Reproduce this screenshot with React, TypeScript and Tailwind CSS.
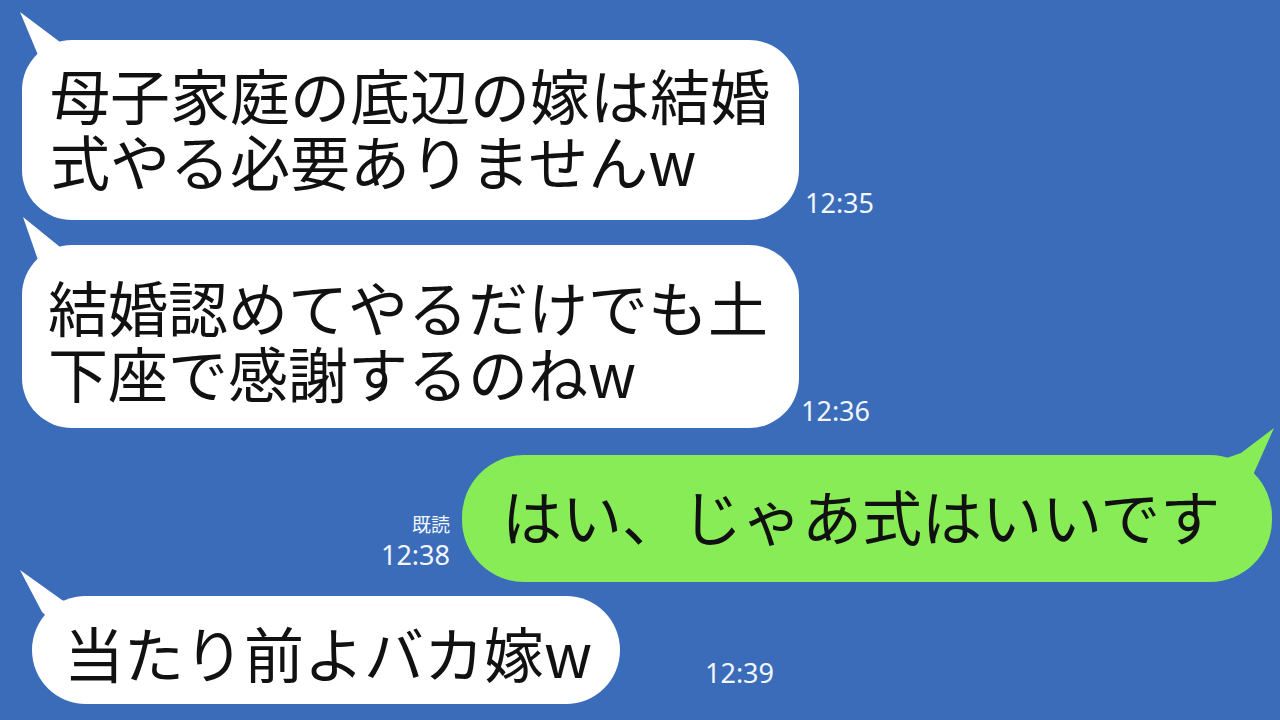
import { Fragment } from 'react';
import type { ReactNode } from 'react';

const jp = { fontFamily: '"Noto Sans CJK JP", "Noto Sans", sans-serif' };
const stamp = { fontFamily: '"Noto Sans", "Noto Sans CJK JP", sans-serif' };

// speech tail that pokes out of the bubble's top-left corner
function LeftTail({ d }: { d: string }) {
  return (
    <svg className="absolute left-0 top-0 overflow-visible" width="1" height="1">
      <path d={d} fill="#ffffff" />
    </svg>
  );
}

function Time({ children, className = '' }: { children: ReactNode; className?: string }) {
  return (
    <div className={`text-[27px] leading-none text-[#f2f6ff] ${className}`} style={stamp}>
      {children}
    </div>
  );
}

function Lines({ lines }: { lines: string[] }) {
  return (
    <p className="text-[60px] leading-[66px] text-[#111] whitespace-nowrap" style={jp}>
      {lines.map((l, i) => (
        <Fragment key={l}>
          {i > 0 && <br />}
          {l}
        </Fragment>
      ))}
    </p>
  );
}

export default function App() {
  return (
    <div className="w-[1280px] h-[720px] bg-[#3a6cba] overflow-hidden flex flex-col">
      {/* incoming */}
      <div className="flex items-end ml-[22px] mt-[40px]">
        <div className="relative bg-white rounded-[50px] w-[777px] h-[180px] pl-[28px] pt-[21px]">
          <LeftTail d="M-2 -28 L16 15 L35 35 L45 8 L38 2 Z" />
          <div className="relative">
            <Lines lines={['母子家庭の底辺の嫁は結婚', '式やる必要ありませんw']} />
          </div>
        </div>
        <Time className="ml-[6px] mb-[4px]">12:35</Time>
      </div>

      <div className="flex items-end ml-[22px] mt-[25px]">
        <div className="relative bg-white rounded-[50px] w-[777px] h-[183px] pl-[26px] pt-[28px]">
          <LeftTail d="M1 -28 L16 15 L35 35 L45 8 L38 2 Z" />
          <div className="relative">
            <Lines lines={['結婚認めてやるだけでも土', '下座で感謝するのねw']} />
          </div>
        </div>
        <Time className="ml-[2px] mb-[4px]">12:36</Time>
      </div>

      {/* outgoing */}
      <div className="flex items-end justify-end mr-[8px] mt-[27px]">
        <div className="flex flex-col items-end mr-[12px] mb-[14px]">
          <div className="text-[19px] leading-none text-[#f2f6ff] mb-[8px]" style={jp}>
            既読
          </div>
          <Time>12:38</Time>
        </div>
        <div className="relative bg-[#87ec55] rounded-[62px] w-[810px] h-[127px] pl-[40px] pt-[27px]">
          <svg className="absolute right-0 top-0 overflow-visible" width="1" height="1">
            <path d="M3 -27 L-30 -2 L-50 5 L-50 30 L-18 20 Z" fill="#87ec55" />
          </svg>
          <div className="relative">
            <Lines lines={['はい、じゃあ式はいいです']} />
          </div>
        </div>
      </div>

      {/* incoming */}
      <div className="flex items-end ml-[32px] mt-[14px]">
        <div className="relative bg-white rounded-[54px] w-[588px] h-[108px] pl-[32px] pt-[23px]">
          <LeftTail d="M-12 -26 L10 16 L30 35 L40 8 L30 4 Z" />
          <div className="relative">
            <Lines lines={['当たり前よバカ嫁w']} />
          </div>
        </div>
        <Time className="ml-[85px] mb-[18px]">12:39</Time>
      </div>
    </div>
  );
}
